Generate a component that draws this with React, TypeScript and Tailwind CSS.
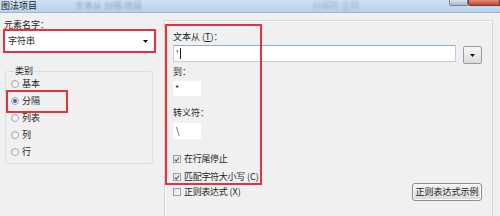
const font = { fontFamily: '"Noto Sans CJK SC", "Noto Sans", sans-serif' };

function Radio({ label, checked }: { label: string; checked?: boolean }) {
  return (
    <div className="flex items-center h-[17px] gap-[3px]">
      <span className="flex items-center justify-center w-[8px] h-[8px] rounded-full border border-[#a2a8b0] bg-gradient-to-br from-[#e4e6e8] to-[#ffffff]">
        {checked && <span className="w-[4px] h-[4px] rounded-full bg-[#3569b0]" />}
      </span>
      <span>{label}</span>
    </div>
  );
}

function Check({ label, checked, hotkey }: { label: string; checked?: boolean; hotkey?: string }) {
  return (
    <div className="flex items-center h-[14px] gap-[3px]">
      <span className="flex items-center justify-center w-[8px] h-[8px] border border-[#9a9fa6] bg-gradient-to-br from-[#dfe2e6] to-[#fafafa]">
        {checked && (
          <svg width="7" height="7" viewBox="0 0 7 7">
            <path d="M1 3.6 L2.8 5.4 L6 1.2" fill="none" stroke="#3d4f78" strokeWidth="1.2" />
          </svg>
        )}
      </span>
      <span className="tracking-[-0.3px]">
        {label}
        {hotkey && <span className="ml-[2px] tracking-normal">({hotkey})</span>}
      </span>
    </div>
  );
}

export default function App() {
  return (
    <div
      className="w-[500px] h-[216px] overflow-hidden bg-[#f0f0f0] flex flex-col text-[9px] leading-[12px] text-[#1e1e1e]"
      style={font}
    >
      {/* title bar */}
      <div className="relative h-[13px] shrink-0 flex items-start bg-gradient-to-b from-[#cfe2f4] to-[#b7d3ee] border-b border-[#9fb3c7]">
        <span className="pl-[1px] leading-[11px] text-[#222]">图法项目</span>
        <span className="ml-[38px] leading-[11px] text-[#8fa4b8] blur-[1px]">文本从 分隔 项目</span>
        <span className="ml-[170px] leading-[11px] text-[#9bb0c4] blur-[1px]">分隔符 正则</span>
        <div className="ml-auto flex h-[6px]">
          <div className="w-[19px] h-[6px] rounded-b-[2px] border border-t-0 border-[#6f8396] bg-gradient-to-b from-[#d8e2ec] to-[#aab9c8]" />
          <div className="w-[32px] h-[6px] rounded-bl-[2px] border border-t-0 border-[#8a3326] bg-gradient-to-b from-[#e08a78] to-[#c2432c]" />
        </div>
      </div>

      <div className="flex flex-1 min-h-0">
        {/* left column */}
        <div className="w-[164px] shrink-0 pt-[7px]">
          <div className="pl-[4px] h-[10px] leading-[10px]">元素名字：</div>
          <div className="relative ml-[5px] mt-[1px] w-[149px] h-[20px] bg-white flex items-center pl-[3px] pr-[6px]">
            <span>字符串</span>
            <svg className="ml-auto" width="5" height="3" viewBox="0 0 5 3">
              <path d="M0 0 H5 L2.5 3 Z" fill="#111" />
            </svg>
            <div className="absolute -inset-[2px] border-2 border-[#e8313c]" />
          </div>

          <fieldset className="ml-[5px] mt-[14px] w-[148px] border border-[#d5dfe5] rounded-[3px] pl-[5px] pb-[3px]">
            <legend className="ml-[3px] px-[1px] leading-[12px]">类别</legend>
            <div className="-mt-[2px]">
              <Radio label="基本" />
              <div className="relative">
                <Radio label="分隔" checked />
                <div className="absolute -left-[5px] -top-[2px] w-[62px] h-[23px] border-2 border-[#e8313c]" />
              </div>
              <Radio label="列表" />
              <Radio label="列" />
              <Radio label="行" />
            </div>
          </fieldset>
        </div>

        {/* right panel */}
        <div className="relative flex-1 mt-[7px] mr-[7px] -mb-[4px] border border-[#d6d6d6] shadow-[inset_1px_1px_0_#ffffff] pl-[8px] pr-[10px] pt-[10px]">
          <div className="h-[12px]">
            文本从 (<span className="underline">T</span>)：
          </div>
          <div className="mt-[2px] flex items-start h-[19px]">
            <div className="w-[283px] h-[17px] bg-white border border-[#b9cfe6] border-t-[#8eadd0] flex items-center pl-[2px]">
              <span>'</span>
              <span className="ml-[1px] w-[1px] h-[11px] bg-[#222]" />
            </div>
            <div className="ml-[7px] mt-[1px] w-[19px] h-[18px] rounded-[2px] border border-[#9a9a9a] bg-gradient-to-b from-[#f6f6f6] to-[#dcdcdc] flex items-center justify-center">
              <svg width="5" height="3" viewBox="0 0 5 3">
                <path d="M0 0 H5 L2.5 3 Z" fill="#111" />
              </svg>
            </div>
          </div>

          <div className="mt-[2px] h-[12px]">到：</div>
          <div className="mt-[3px] w-[28px] h-[15px] bg-white flex items-center pl-[2px]">*</div>

          <div className="mt-[11px] h-[12px]">转义符：</div>
          <div className="mt-[4px] w-[28px] h-[16px] bg-white flex items-center pl-[3px]">\</div>

          <div className="mt-[13px]">
            <Check label="在行尾停止" checked />
          </div>
          <div className="mt-[4px]">
            <Check label="匹配字符大小写" hotkey="C" checked />
          </div>
          <div className="-mt-[1px] flex items-center justify-between h-[18px]">
            <Check label="正则表达式" hotkey="X" />
            <div className="w-[70px] h-[18px] rounded-[3px] border border-[#8c8c8c] shadow-[inset_0_0_0_1px_#fbfbfb] bg-gradient-to-b from-[#f4f4f4] to-[#dadada] flex items-center justify-center">
              正则表达式示例
            </div>
          </div>

          <div className="absolute left-0 top-[3px] w-[97px] h-[161px] border-2 border-[#e8313c]" />
        </div>
      </div>
    </div>
  );
}
